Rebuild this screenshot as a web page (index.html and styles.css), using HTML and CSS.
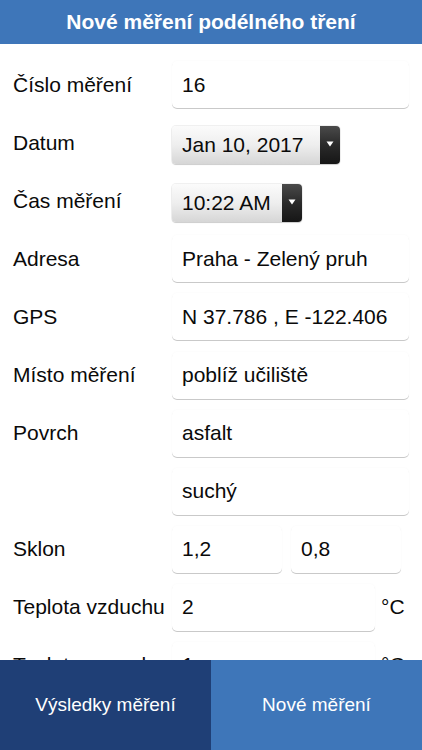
FILE: index.html
```html
<!DOCTYPE html>
<html lang="cs">
<head>
<meta charset="utf-8">
<title>Nové měření podélného tření</title>
<link rel="stylesheet" href="styles.css">
</head>
<body>
<header class="topbar">Nové měření podélného tření</header>
<main class="form">
  <div class="row"><span class="label">Číslo měření</span><div class="field">16</div></div>
  <div class="row"><span class="label">Datum</span>
    <div class="picker date"><span class="picker-text">Jan 10, 2017</span><span class="picker-btn"><svg width="8" height="6" viewBox="0 0 8 6"><path d="M0.5 0.5 H7.5 L4 5.5 Z" fill="#fff"/></svg></span></div>
  </div>
  <div class="row"><span class="label">Čas měření</span>
    <div class="picker time"><span class="picker-text">10:22 AM</span><span class="picker-btn"><svg width="8" height="6" viewBox="0 0 8 6"><path d="M0.5 0.5 H7.5 L4 5.5 Z" fill="#fff"/></svg></span></div>
  </div>
  <div class="row"><span class="label">Adresa</span><div class="field">Praha - Zelený pruh</div></div>
  <div class="row"><span class="label">GPS</span><div class="field">N 37.786 , E -122.406</div></div>
  <div class="row"><span class="label">Místo měření</span><div class="field">poblíž učiliště</div></div>
  <div class="row"><span class="label">Povrch</span><div class="field">asfalt</div></div>
  <div class="row"><span class="label"></span><div class="field">suchý</div></div>
  <div class="row"><span class="label">Sklon</span>
    <div class="pair"><div class="field half">1,2</div><div class="field half">0,8</div></div>
  </div>
  <div class="row"><span class="label">Teplota vzduchu</span><div class="field unitfield">2</div><span class="unit">°C</span></div>
  <div class="row"><span class="label">Teplota vozovky</span><div class="field unitfield">1</div><span class="unit">°C</span></div>
</main>
<nav class="bottombar">
  <div class="tab tab-dark">Výsledky měření</div>
  <div class="tab tab-light">Nové měření</div>
</nav>
</body>
</html>
```
FILE: styles.css
```css
html, body {
  margin: 0;
  padding: 0;
  height: 750px;
  overflow: hidden;
  background: #fff;
  font-family: "Liberation Sans", Arial, Helvetica, sans-serif;
  color: #0a0a0a;
}
.topbar {
  height: 44px;
  background: #3e76b9;
  color: #fff;
  font-weight: bold;
  font-size: 21px;
  display: flex;
  align-items: center;
  justify-content: center;
}
.form {
  padding-top: 11.5px;
}
.row {
  height: 58.1px;
  display: flex;
  align-items: center;
  padding-left: 13px;
  font-size: 21px;
}
.label {
  width: 159px;
  flex: none;
  white-space: nowrap;
}
.field {
  width: 237px;
  height: 47px;
  box-sizing: border-box;
  padding-left: 10px;
  display: flex;
  align-items: center;
  background: #fff;
  border-radius: 5px;
  box-shadow: 0 1px 0 #c9c9c9, 0 0 2px rgba(0,0,0,0.04);
  white-space: nowrap;
}
.pair {
  display: flex;
  gap: 9px;
}
.field.half {
  width: 110px;
}
.field.unitfield {
  width: 203px;
}
.unit {
  margin-left: 6px;
}
.picker {
  display: flex;
  height: 38px;
  margin-top: 5px;
  border-radius: 4px;
  overflow: hidden;
  box-shadow: 0 0 0 1px rgba(0,0,0,0.06), 0 1px 1px rgba(0,0,0,0.15);
}
.picker.date { width: 168px; }
.picker.time { width: 130px; }
.picker-text {
  flex: 1;
  display: flex;
  align-items: center;
  padding-left: 10px;
  background: linear-gradient(#fbfbfb 0%, #eeeeee 50%, #d6d6d6 100%);
  white-space: nowrap;
}
.picker-btn {
  width: 20px;
  flex: none;
  display: flex;
  align-items: center;
  justify-content: center;
  background: linear-gradient(#4a4a4a 0%, #2a2a2a 50%, #161616 100%);
}
.picker-btn svg {
  margin-top: -2px;
}
.bottombar {
  position: fixed;
  left: 0;
  right: 0;
  bottom: 0;
  height: 90px;
  display: flex;
}
.tab {
  display: flex;
  align-items: center;
  justify-content: center;
  color: #fff;
  font-size: 19px;
}
.tab-dark {
  width: 211px;
  background: #1f3f76;
}
.tab-light {
  flex: 1;
  background: #3e76b9;
}
```
